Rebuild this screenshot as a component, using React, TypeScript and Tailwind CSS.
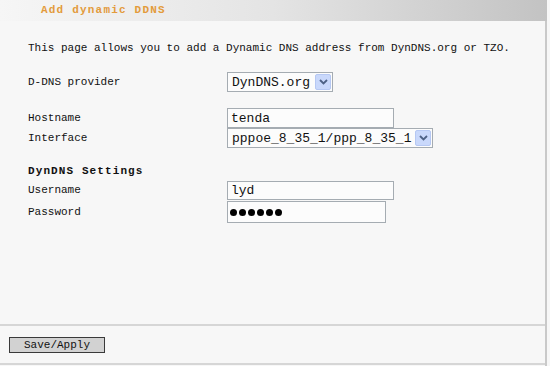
const Chevron = () => (
  <span className="flex h-[16px] w-[16px] items-center justify-center rounded-[2px] border border-[#b6c8f3] bg-[#c9d8fb]">
    <svg width="9" height="6" viewBox="0 0 9 6">
      <path d="M1 1 L4.5 4.5 L8 1" fill="none" stroke="#4d6185" strokeWidth="1.8" />
    </svg>
  </span>
);

const Select = ({ value, width }: { value: string; width: string }) => (
  <div
    className={`flex h-[20px] ${width} items-center justify-between border border-[#a5acb2] bg-[#fcfcfc] pl-[4px] pr-[1px] text-[13px] leading-none`}
  >
    <span>{value}</span>
    <Chevron />
  </div>
);

const TextBox = ({ value, width, height }: { value: string; width: string; height: string }) => (
  <div
    className={`flex ${height} ${width} items-center border border-[#a5acb2] bg-[#fcfcfc] pl-[3px] text-[13px] leading-none`}
  >
    {value}
  </div>
);

export default function App() {
  return (
    <div className="h-[366px] w-[550px] overflow-hidden bg-[#f7f7f7] font-['Liberation_Mono',monospace] text-[11px] text-[#111]">
      <header className="flex h-[21px] w-[547px] items-center bg-gradient-to-r from-[#f6f6f6] via-[#e4e4e4] to-[#c3c3c3] pl-[41px]">
        <span className="font-bold tracking-[1.2px] text-[#e39b3c]">Add dynamic DDNS</span>
      </header>
      <div className="flex">
        <div className="flex h-[345px] w-[545px] flex-col">
          <p className="mt-[19px] pl-[28px] leading-[16px]">
            This page allows you to add a Dynamic DNS address from DynDNS.org or TZO.
          </p>

          <div className="mt-[16px] flex items-center pl-[28px]">
            <span className="w-[199px]">D-DNS provider</span>
            <Select value="DynDNS.org" width="w-[106px]" />
          </div>

          <div className="mt-[16px] flex items-center pl-[28px]">
            <span className="w-[199px]">Hostname</span>
            <TextBox value="tenda" width="w-[167px]" height="h-[20px]" />
          </div>
          <div className="flex items-center pl-[28px]">
            <span className="w-[199px]">Interface</span>
            <Select value="pppoe_8_35_1/ppp_8_35_1" width="w-[206px]" />
          </div>

          <h3 className="mt-[15px] pl-[28px] font-bold leading-[16px] tracking-[1.1px]">DynDNS Settings</h3>

          <div className="mt-[2px] flex items-center pl-[28px]">
            <span className="w-[199px]">Username</span>
            <TextBox value="lyd" width="w-[167px]" height="h-[19px]" />
          </div>
          <div className="mt-[1px] flex items-center pl-[28px]">
            <span className="w-[199px]">Password</span>
            <div className="flex h-[22px] w-[159px] items-center gap-[2px] border border-[#a5acb2] bg-[#fcfcfc] pl-[2px]">
              {[0, 1, 2, 3, 4, 5].map((i) => (
                <span key={i} className="h-[7px] w-[7px] rounded-full bg-black" />
              ))}
            </div>
          </div>

          <div className="mt-[101px] border-t-2 border-[#d6d6d6]" />
          <button className="ml-[9px] mt-[11px] h-[16px] w-[96px] border border-[#3a3a3a] bg-[#d2d2d2] text-[11px] leading-none">
            Save/Apply
          </button>
          <div className="mt-[10px] border-t-2 border-[#d6d6d6]" />
        </div>
        <div className="h-[345px] w-[2px] bg-[#c9c9c9]" />
      </div>
    </div>
  );
}
